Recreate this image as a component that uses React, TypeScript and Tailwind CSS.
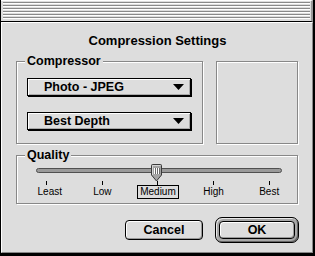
import React from 'react';

const font = "font-['Liberation_Sans',Arial,sans-serif]";

const PopUp = ({ label }: { label: string }) => (
  <div className="relative flex items-center w-[164px] h-[18px] border border-black bg-[#dddddd] shadow-[1px_1px_0_#000,inset_1px_1px_0_#fff,inset_-1px_-1px_0_#aaa] pl-[16px] pr-[6px]">
    <span className="flex-1 text-[12.5px] leading-[16px] font-bold text-black">{label}</span>
    <svg width="11" height="6" viewBox="0 0 11 6">
      <polygon points="0,0 11,0 5.5,6" fill="#000" />
    </svg>
  </div>
);

const GroupBox = ({
  title,
  className,
  children,
}: {
  title?: string;
  className: string;
  children?: React.ReactNode;
}) => (
  <div
    className={`relative border border-[#888888] shadow-[inset_1px_1px_0_#fff,1px_1px_0_#fff] ${className}`}
  >
    {title && (
      <span className="absolute left-[8px] top-[-9px] px-[2px] bg-[#dddddd] text-[12.5px] leading-[16px] font-bold text-black">
        {title}
      </span>
    )}
    {children}
  </div>
);

const Thumb = () => (
  <svg width="11" height="18" viewBox="0 0 11 18">
    <path
      d="M0.5 1.5 Q0.5 0.5 1.5 0.5 H9.5 Q10.5 0.5 10.5 1.5 V11 L5.5 17 L0.5 11 Z"
      fill="#a3a3a3"
      stroke="#3a3a3a"
    />
    <path d="M1.5 11 V1.5 H9.5" stroke="#d4d4d4" fill="none" />
    <path d="M3.5 4 V10 M5.5 4 V10 M7.5 4 V10" stroke="#ffffff" />
    <path d="M4.5 4 V10 M6.5 4 V10 M8.5 4 V10" stroke="#6a6a6a" />
  </svg>
);

const marks = ['Least', 'Low', 'Medium', 'High', 'Best'];

export default function App() {
  return (
    <div
      className={`w-[315px] h-[256px] flex flex-col bg-[#dddddd] border-l border-r-2 border-b-[3px] border-black ${font} select-none`}
    >
      {/* title bar */}
      <div className="h-[22px] shrink-0 border-b border-black border-t border-t-white border-r-2 border-r-[#999] pl-[2px] pr-[1px] pt-[1px]">
        <div className="h-[17px] bg-[repeating-linear-gradient(to_bottom,#8a8a8a_0px,#8a8a8a_1px,#ffffff_1px,#ffffff_2px,#dddddd_2px,#dddddd_3px)]" />
      </div>

      {/* body */}
      <div className="flex-1 flex flex-col border-l border-t border-white border-r border-b border-r-[#888] border-b-[#888] pl-[14px] pr-[13px]">
        <div className="pt-[10px] text-center text-[13px] leading-[16px] font-bold text-black">
          Compression Settings
        </div>

        <div className="mt-[12px] flex gap-[13px]">
          <GroupBox title="Compressor" className="w-[187px] h-[83px] pt-[16px] pl-[10px]">
            <div className="flex flex-col gap-[16px]">
              <PopUp label="Photo - JPEG" />
              <PopUp label="Best Depth" />
            </div>
          </GroupBox>
          <GroupBox className="w-[82px] h-[83px]" />
        </div>

        <GroupBox title="Quality" className="mt-[11px] w-[282px] h-[49px] pt-[12px]">
          <div className="ml-[19px] w-[246px] h-[5px] rounded-full border border-[#505050] bg-[#9a9a9a]" />
          <div className="absolute left-[134px] top-[8px]">
            <Thumb />
          </div>
          <div className="mt-[8px] ml-[2px] flex">
            {marks.map((m) => (
              <div key={m} className="w-[56px] flex flex-col items-center">
                <div className="w-px h-[4px] bg-black" />
                <span
                  className={`px-[2px] text-[10px] leading-[12px] text-black border ${
                    m === 'Medium' ? 'border-black' : 'border-transparent'
                  } ${m === 'Least' ? 'ml-[6px]' : ''}`}
                >
                  {m}
                </span>
              </div>
            ))}
          </div>
        </GroupBox>

        <div className="mt-[13px] flex items-center justify-end gap-[12px]">
          <button className="w-[78px] h-[20px] rounded-[4px] border border-black bg-[#dddddd] shadow-[inset_1px_1px_0_#fff,inset_-1px_-1px_0_#999] text-[12.5px] leading-[16px] font-bold text-black">
            Cancel
          </button>
          <div className="flex w-[84px] h-[26px] rounded-[7px] border border-black bg-[#a8a8a8] shadow-[inset_1px_1px_0_#e8e8e8,inset_-1px_-1px_0_#666] p-[3px]">
            <button className="flex-1 flex items-center justify-center rounded-[4px] border border-black bg-[#dddddd] shadow-[inset_1px_1px_0_#fff,inset_-1px_-1px_0_#999] text-[12.5px] leading-[14px] font-bold text-black">
              OK
            </button>
          </div>
        </div>
      </div>
    </div>
  );
}
